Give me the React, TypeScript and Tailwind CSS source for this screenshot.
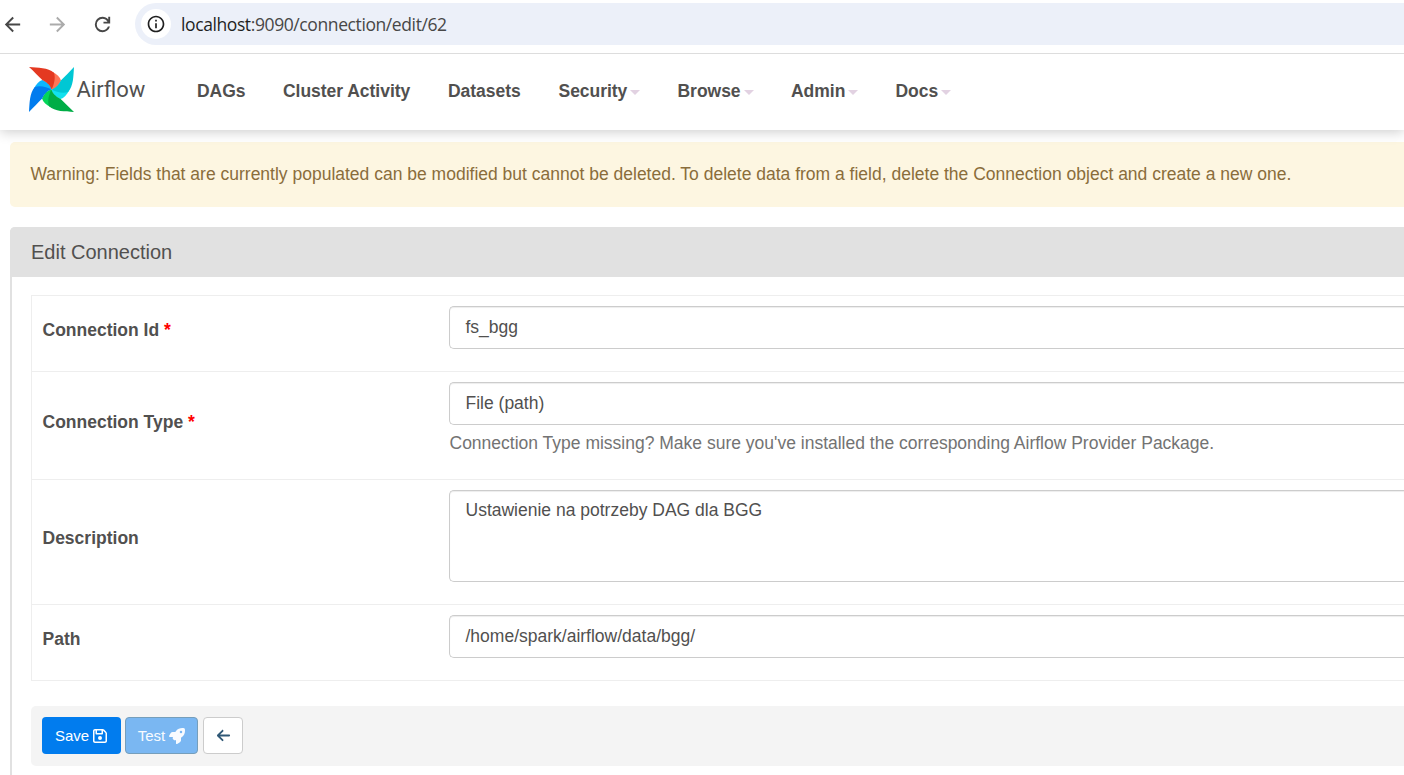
import type { ReactNode } from "react";
import { MdArrowBack, MdArrowForward, MdInfoOutline } from "react-icons/md";
import { FaArrowLeft, FaRegFloppyDisk, FaRocket } from "react-icons/fa6";

const blades = [
  { turn: "rotate(0 22.5 22.5)", dark: "#e43921", light: "#ff7557" },
  { turn: "rotate(90 22.5 22.5)", dark: "#00c7d4", light: "#11e1ee" },
  { turn: "rotate(180 22.5 22.5)", dark: "#00ad46", light: "#04d659" },
  { turn: "rotate(270 22.5 22.5)", dark: "#017cee", light: "#0cb6ff" },
];

function Pinwheel() {
  return (
    <svg className="size-[45px] shrink-0" viewBox="0 0 45 45">
      {blades.map((b) => (
        <path key={b.light} transform={b.turn} d="M23.5 5C28 7 31 10.2 32 13.4C29.4 19.3 26.5 21.8 22.5 22.5Z" fill={b.light} />
      ))}
      {blades.map((b) => (
        <path key={b.dark} transform={b.turn} d="M0 0C9 .6 19 .5 25 5.8C26.8 11 25 18 22.5 22.5C21.5 18.8 19 16 13.6 13.2C9 8.8 5 4.5 0 0Z" fill={b.dark} />
      ))}
    </svg>
  );
}

function Reload() {
  return (
    <svg className="ml-[22px] size-[23px] text-[#474747]" viewBox="0 -960 960 960" fill="currentColor">
      <path d="M480-160q-134 0-227-93t-93-227q0-134 93-227t227-93q69 0 132 28.5T720-690v-110h80v280H520v-80h168q-32-56-87.5-88T480-720q-100 0-170 70t-70 170q0 100 70 170t170 70q77 0 139-44t87-116h84q-28 106-114 173t-196 67Z" />
    </svg>
  );
}

function NavItem({ label, width, menu }: { label: string; width: string; menu?: boolean }) {
  return (
    <a className={`flex shrink-0 items-center ${width}`}>
      <span className="tracking-[-0.03px]">{label}</span>
      {menu && <span className="mt-px ml-[3px] border-x-[5px] border-t-[5px] border-x-transparent border-t-[#e2d2e2]" />}
    </a>
  );
}

function Row({ label, required, height, children }: { label: string; required?: boolean; height: string; children: ReactNode }) {
  return (
    <div className={`flex border-b border-[#eeeeee] ${height}`}>
      <div className="flex w-[417px] shrink-0 items-center pb-[7px] pl-[10.5px] font-bold">
        <span>
          {label}
          {required && <span className="text-[#ff0000]"> *</span>}
        </span>
      </div>
      <div className="min-w-0 flex-1 pt-[10px]">{children}</div>
    </div>
  );
}

function Field({ children, size = "h-[43px] pt-[8px]" }: { children: ReactNode; size?: string }) {
  return (
    <div className={`rounded-l-[5px] border border-r-0 border-[#cccccc] bg-white pl-[15.5px] leading-[25px] shadow-[inset_0_1px_1px_rgba(0,0,0,0.075)] ${size}`}>
      {children}
    </div>
  );
}

export default function App() {
  return (
    <div className="flex h-[775px] w-full flex-col overflow-hidden bg-white font-['Liberation_Sans',Arial,sans-serif] text-[17.5px] leading-[25px] text-[#51504f]">
      <div className="relative z-20 flex h-[54px] shrink-0 border-b border-[#dddddd] bg-white pt-[3px]">
        <div className="flex h-[42px] w-[135px] shrink-0 items-center text-[23px]">
          <MdArrowBack className="ml-px text-[#474747]" />
          <MdArrowForward className="ml-[22px] text-[#ababab]" />
          <Reload />
        </div>
        <div className="flex h-[42px] flex-1 items-center rounded-l-full bg-[#ecf0f9] pl-[6px]">
          <span className="flex size-[30px] items-center justify-center rounded-full bg-white">
            <MdInfoOutline className="text-[20px] text-[#1f1f1f]" />
          </span>
          <span className="ml-[10px] font-['Open_Sans','Noto_Sans',sans-serif] text-[17.5px] tracking-[-0.4px] text-[#474747]">
            <span className="text-[#1f1f1f]">localhost</span>:9090/connection/edit/62
          </span>
        </div>
      </div>

      <nav className="relative z-10 flex h-[76px] shrink-0 bg-white pl-[29px] shadow-[0_2px_12px_rgba(0,0,0,0.2)]">
        <div className="mt-[13px] flex h-[45px] w-[168px] shrink-0 items-center">
          <Pinwheel />
          <span className="ml-[2.5px] font-[Roboto,sans-serif] text-[22px]">Airflow</span>
        </div>
        <div className="flex h-[75px] items-center font-bold">
          <NavItem label="DAGs" width="w-[86px]" />
          <NavItem label="Cluster Activity" width="w-[165px]" />
          <NavItem label="Datasets" width="w-[110.5px]" />
          <NavItem label="Security" width="w-[119px]" menu />
          <NavItem label="Browse" width="w-[113.5px]" menu />
          <NavItem label="Admin" width="w-[104.5px]" menu />
          <NavItem label="Docs" width="w-[90px]" menu />
        </div>
      </nav>

      <main className="flex flex-1 flex-col pt-3 pl-[10px]">
        <div className="h-[65px] shrink-0 rounded-l-[5px] bg-[#fdf6e1] pt-[20px] pl-[20.5px] whitespace-nowrap text-[#8a6d3b]">
          Warning: Fields that are currently populated can be modified but cannot be deleted. To delete data from a field, delete the Connection object and create a new one.
        </div>

        <section className="mt-5 flex flex-1 flex-col rounded-tl-[5px] border-l-2 border-[#e1e1e1]">
          <h1 className="-ml-[2px] h-[50px] shrink-0 rounded-tl-[5px] bg-[#e1e1e1] pt-[13px] pl-[21px] text-[20px] leading-[25px]">Edit Connection</h1>
          <div className="mt-[18px] ml-[19px] shrink-0 border-t border-l border-[#eeeeee]">
            <Row label="Connection Id" required height="h-[76px]">
              <Field>fs_bgg</Field>
            </Row>
            <Row label="Connection Type" required height="h-[108px]">
              <Field>File (path)</Field>
              <p className="mt-[6px] whitespace-nowrap pl-[0.5px] text-[#737373]">
                Connection Type missing? Make sure you've installed the corresponding Airflow Provider Package.
              </p>
            </Row>
            <Row label="Description" height="h-[125px]">
              <Field size="h-[92px] pt-[7px]">Ustawienie na potrzeby DAG dla BGG</Field>
            </Row>
            <Row label="Path" height="h-[76px]">
              <Field>/home/spark/airflow/data/bgg/</Field>
            </Row>
          </div>
          <div className="mt-[25px] ml-[19px] flex h-[60px] shrink-0 items-start rounded-l-[5px] bg-[#f4f4f4] pt-[11px] pl-[11px] text-[15px]">
            <button className="flex h-[37px] w-[79px] items-center justify-center gap-[3px] rounded-[4px] bg-[#017cee] text-white">
              Save <FaRegFloppyDisk className="size-4" />
            </button>
            <button className="ml-[4px] flex h-[37px] w-[73px] items-center justify-center gap-1 rounded-[4px] border border-[#759ebb] bg-[#7ab7f2] text-[#f8fbff]">
              Test <FaRocket className="size-4" />
            </button>
            <button className="ml-[5px] flex h-[37px] w-[40px] items-center justify-center rounded-[4px] border border-[#cccccc] bg-white text-[#2f5876]">
              <FaArrowLeft />
            </button>
          </div>
        </section>
      </main>
    </div>
  );
}
